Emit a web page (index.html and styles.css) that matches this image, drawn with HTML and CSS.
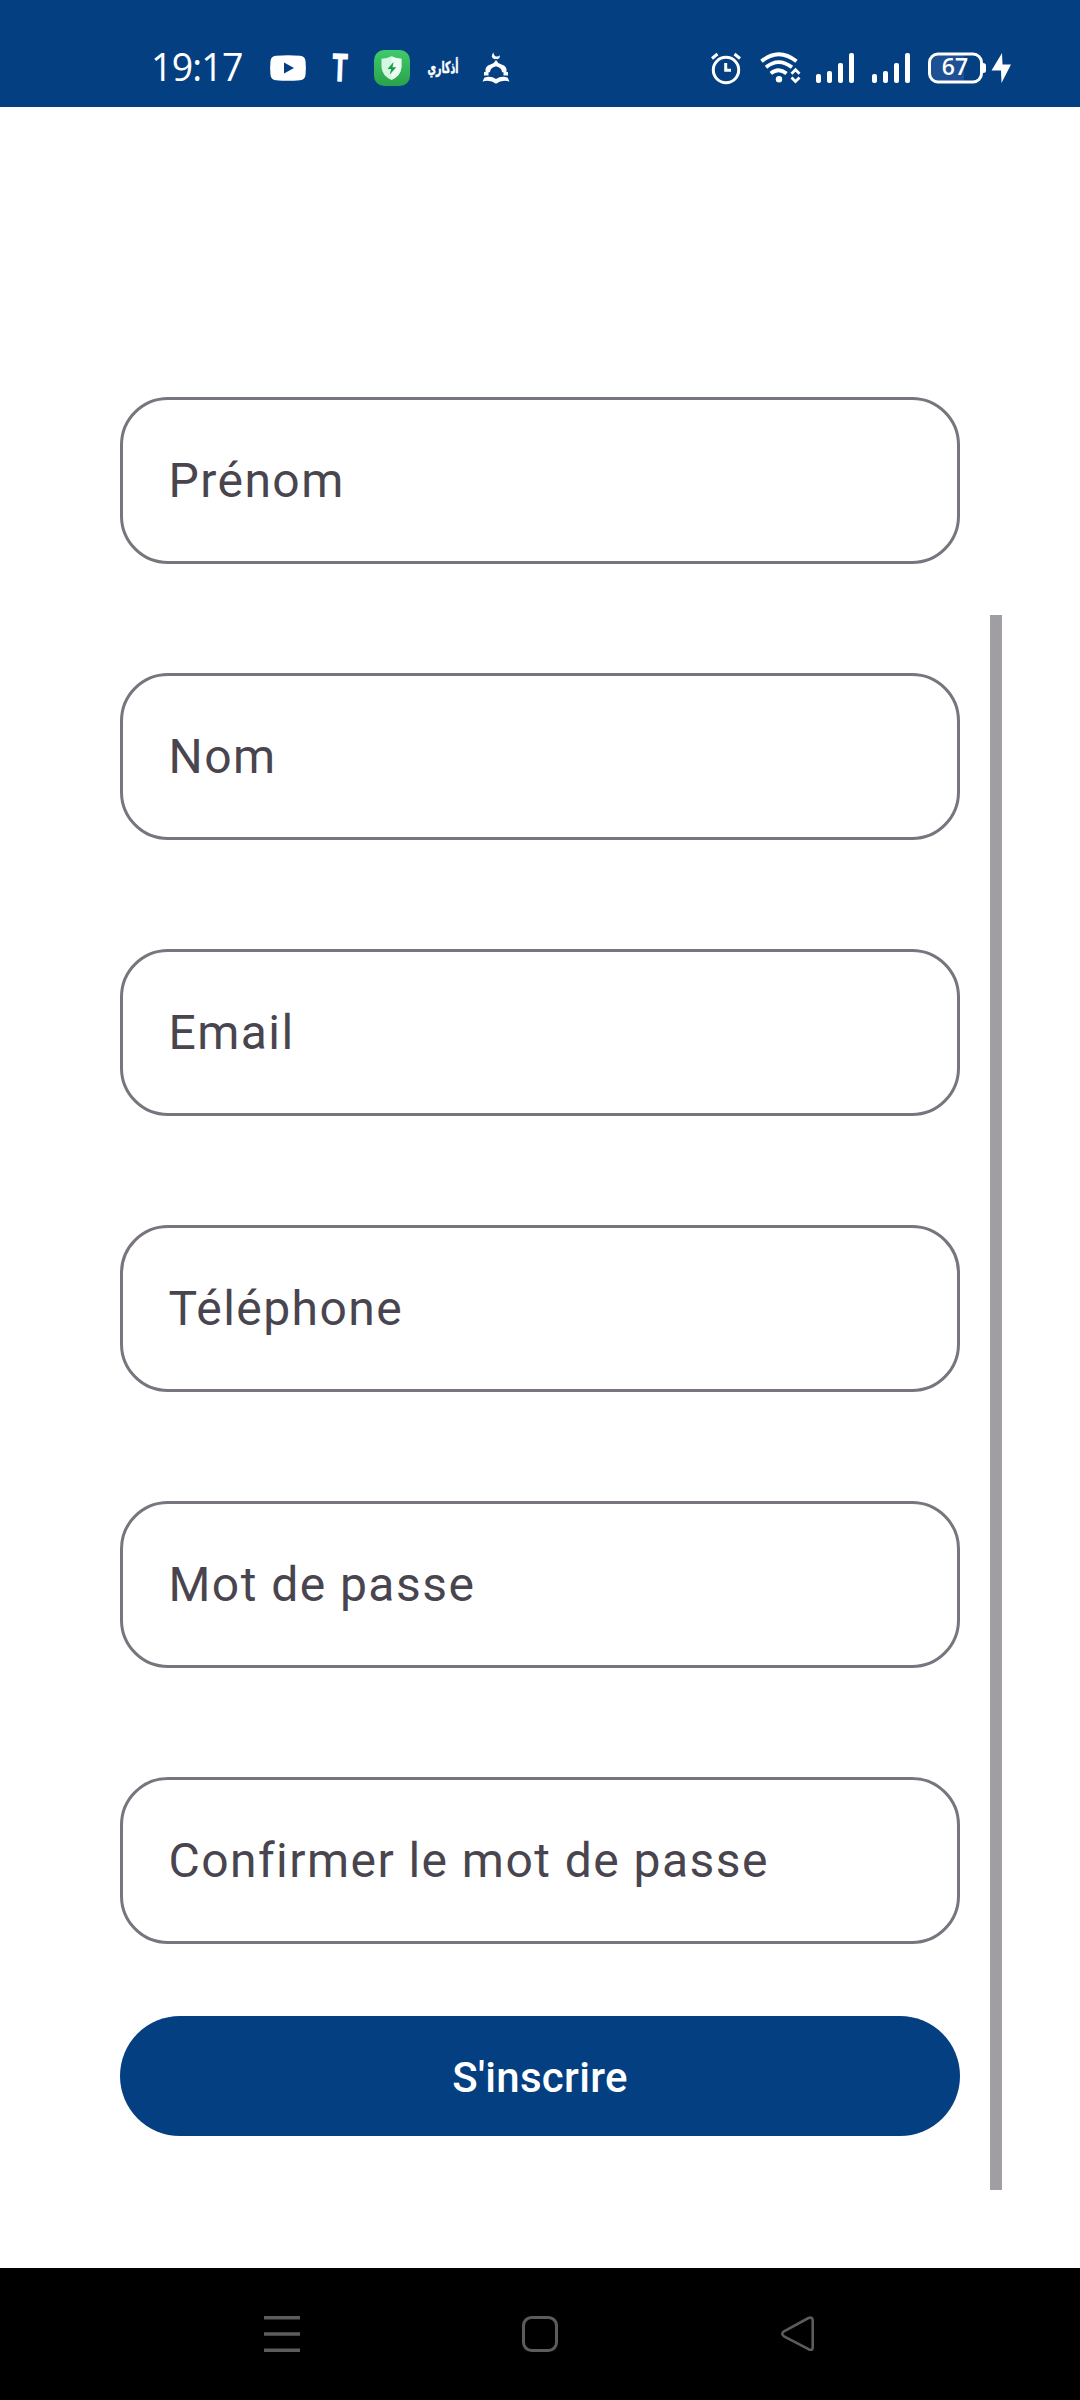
FILE: index.html
```html
<!DOCTYPE html>
<html lang="fr">
<head>
<meta charset="utf-8">
<meta name="viewport" content="width=device-width">
<title>Inscription</title>
<link rel="stylesheet" href="styles.css">
</head>
<body>
<header class="status">
  <div class="status-group">
    <span class="clock">19:17</span>
    <svg class="ic-video" width="36" height="26" viewBox="0 0 36 26"><path fill="#fff" d="M6 .8Q18-.5 30 .8 35 1 35.500 6 36.300 13 35.500 20 35 25 30 25.300 18 26.400 6 25.300 1 25 .5 20-.3 13 .5 6 1 1 6 .8z"/><path fill="#043f82" d="M14 7.500v11l10-5.500z"/></svg>
    <svg class="ic-t" width="18" height="32" viewBox="0 0 18 32"><text class="t-mark" x="9" y="29" text-anchor="middle" textLength="16" lengthAdjust="spacingAndGlyphs" transform="rotate(2 9 16)">T</text></svg>
    <svg class="ic-shield" width="36" height="36" viewBox="0 0 36 36"><defs><linearGradient id="g" x1="0" y1="0" x2="0" y2="1"><stop offset="0" stop-color="#3fca6b"/><stop offset="1" stop-color="#2aa24b"/></linearGradient></defs><rect width="36" height="36" rx="10" fill="url(#g)"/><path fill="#d3f7e0" d="M17.500 6.300Q22 8.500 27.500 8.800V17Q27 25.500 17.500 30 8 25.500 7.500 17V8.800Q13 8.500 17.500 6.300z"/><path fill="#fff" d="M17.500 6.300Q22 8.500 27.500 8.800V17Q27 25.500 17.500 30z" opacity=".6"/><path fill="#1d9a4b" d="M19.500 12l-6 7h3.700l-1.400 5.500 6.500-7.300h-3.800z"/></svg>
    <svg class="ic-adhkar" width="33" height="28" viewBox="0 0 33 28"><text class="adhkar" x="17" y="19" text-anchor="middle" textLength="31" lengthAdjust="spacingAndGlyphs">أذكاري</text></svg>
    <svg class="ic-mosque" width="28" height="34" viewBox="0 0 28 34"><path fill="#fff" d="M11.500 1.200Q7.500 6 12.500 8.300L14 7.700 15.500 8.300Q18.300 6.800 18 4.300 15.500 6.300 13 5 11 3.500 11.500 1.200zM2 24.500V21H3.500Q2.500 15 8.500 13.500 12.500 12.300 14 9 15.500 12.300 19.500 13.500 25.500 15 24.500 21H26V24.500H21.500V21.200H20Q20 17 14 15.300 8 17 8 21.200H6.500V24.500zM2.500 26.500Q9 24.500 14 28 19 24.500 25.500 26.500L27.500 30.500Q20 28 14 32.700 8 28 .5 30.500z"/></svg>
  </div>
  <div class="status-group">
    <svg class="ic-alarm" width="30" height="32" viewBox="0 0 30 32"><g fill="none" stroke="#fff" stroke-width="3"><circle cx="15" cy="18" r="12.700"/><path d="M1 6.500L6.500 2M29 6.500L23.500 2"/><path d="M14.700 11v7.300H20"/></g></svg>
    <svg class="ic-wifi" width="40" height="32" viewBox="0 0 40 32"><g fill="none" stroke="#fff" stroke-width="3.800"><path d="M1.500 9.300Q18.500-4.700 36.500 9.300"/><path d="M6 15.300Q18.500 5 32 15.300"/><path d="M10.800 21.400Q18.500 15 26.500 21.400"/></g><circle cx="19" cy="27.300" r="3.200" fill="#fff"/><path fill="none" stroke="#fff" stroke-width="2.800" d="M31.500 21.700l4-4 4 4M31.500 25.500l4 4 4-4"/></svg>
    <svg class="ic-signal" width="38" height="30" viewBox="0 0 38 30"><g fill="#fff"><rect y="21" width="5" height="9" rx="2"/><rect x="11" y="18" width="5" height="12" rx="2"/><rect x="22" y="10" width="5" height="20" rx="2"/><rect x="33" width="5" height="30" rx="2"/></g></svg>
    <svg class="ic-signal" width="38" height="30" viewBox="0 0 38 30"><g fill="#fff"><rect y="21" width="5" height="9" rx="2"/><rect x="11" y="18" width="5" height="12" rx="2"/><rect x="22" y="10" width="5" height="20" rx="2"/><rect x="33" width="5" height="30" rx="2"/></g></svg>
    <svg class="ic-battery" width="83" height="32" viewBox="0 0 83 32"><path fill="#28579a" d="M9 3h27v26H9q-6 0-6-6V9q0-6 6-6z" opacity=".75"/><rect x="1.500" y="2" width="52" height="28" rx="8.500" fill="none" stroke="#fff" stroke-width="3"/><path fill="#fff" d="M55 11q3 0 3 2.500v5q0 2.500-3 2.500z"/><text class="level" x="27" y="23" text-anchor="middle">67</text><path fill="#fff" d="M74 1L63.500 18.500h9.500L73.500 31 83 12.500h-8.500z"/></svg>
  </div>
</header>
<main class="page">
  <form class="form">
    <div class="field">Prénom</div>
    <div class="field">Nom</div>
    <div class="field">Email</div>
    <div class="field">Téléphone</div>
    <div class="field">Mot de passe</div>
    <div class="field">Confirmer le mot de passe</div>
    <button class="submit" type="button">S'inscrire</button>
  </form>
  <div class="scrollbar"></div>
</main>
<nav class="nav">
  <svg width="36" height="36" viewBox="0 0 36 36"><path stroke="#5c5c5c" stroke-width="3.500" d="M0 1.750h36M0 18h36M0 34.250h36"/></svg>
  <svg width="36" height="36" viewBox="0 0 36 36"><rect x="1.500" y="1.500" width="33" height="33" rx="8" fill="none" stroke="#5c5c5c" stroke-width="3"/></svg>
  <svg width="36" height="36" viewBox="0 0 36 36"><path fill="none" stroke="#5c5c5c" stroke-width="2.600" stroke-linejoin="round" d="M28.500 2Q32.700.500 32.700 4.500V31.500Q32.700 35 28.500 33.200L4 20.300Q.500 17.800 4 15.300z"/></svg>
</nav>
</body>
</html>
```
FILE: styles.css
```css
* { box-sizing: border-box; }
body {
  margin: 0;
  width: 1080px;
  height: 2400px;
  display: flex;
  flex-direction: column;
  background: #fff;
  font-family: Roboto, sans-serif;
}
svg { display: block; flex: none; overflow: visible; }

.status {
  height: 107px;
  padding: 29px 69px 0 151px;
  display: flex;
  justify-content: space-between;
  background: #043f82;
  color: #fff;
}
.status-group { display: flex; align-items: center; height: 78px; }
.clock {
  width: 119px;
  padding-bottom: 2px;
  font: 400 37.5px/52px "Open Sans", sans-serif;
  letter-spacing: -0.8px;
}
.ic-t { margin-left: 25px; }
.t-mark { font: 700 37px Inter, sans-serif; fill: #fff; stroke: #fff; stroke-width: 1.3px; }
.ic-shield { margin-left: 25px; }
.ic-adhkar { margin-left: 16px; }
.adhkar { font: 700 16px "DejaVu Sans", sans-serif; fill: #fff; stroke: #fff; stroke-width: 0.5px; }
.ic-mosque { margin-left: 23px; }
.ic-wifi { margin-left: 19px; }
.ic-signal { margin-left: 16px; }
.ic-signal + .ic-signal { margin-left: 18px; }
.ic-battery { margin-left: 18px; }
.level { font: 600 23px "Open Sans", sans-serif; fill: #fff; }

.page {
  height: 2161px;
  padding: 290px 78px 0 120px;
  display: flex;
  gap: 30px;
}
.form { width: 840px; display: flex; flex-direction: column; }
.field {
  height: 167px;
  margin-bottom: 109px;
  padding-left: 45.500px;
  border: 3px solid #79747e;
  border-radius: 48px;
  display: flex;
  align-items: center;
  color: #49454f;
  font-size: 48px;
  letter-spacing: 1.45px;
}
.field:nth-child(6) { margin-bottom: 72px; }
.submit {
  height: 120px;
  padding: 4px 0 0;
  border: 0;
  border-radius: 60px;
  background: #043f82;
  color: #fff;
  font: 500 42px/48px Roboto, sans-serif;
  letter-spacing: 0.3px;
}
.scrollbar { width: 12px; height: 1575px; margin-top: 218px; background: #a19ea3; }

.nav {
  height: 132px;
  padding: 0 264px;
  display: flex;
  align-items: center;
  justify-content: space-between;
  background: #000;
}
```
